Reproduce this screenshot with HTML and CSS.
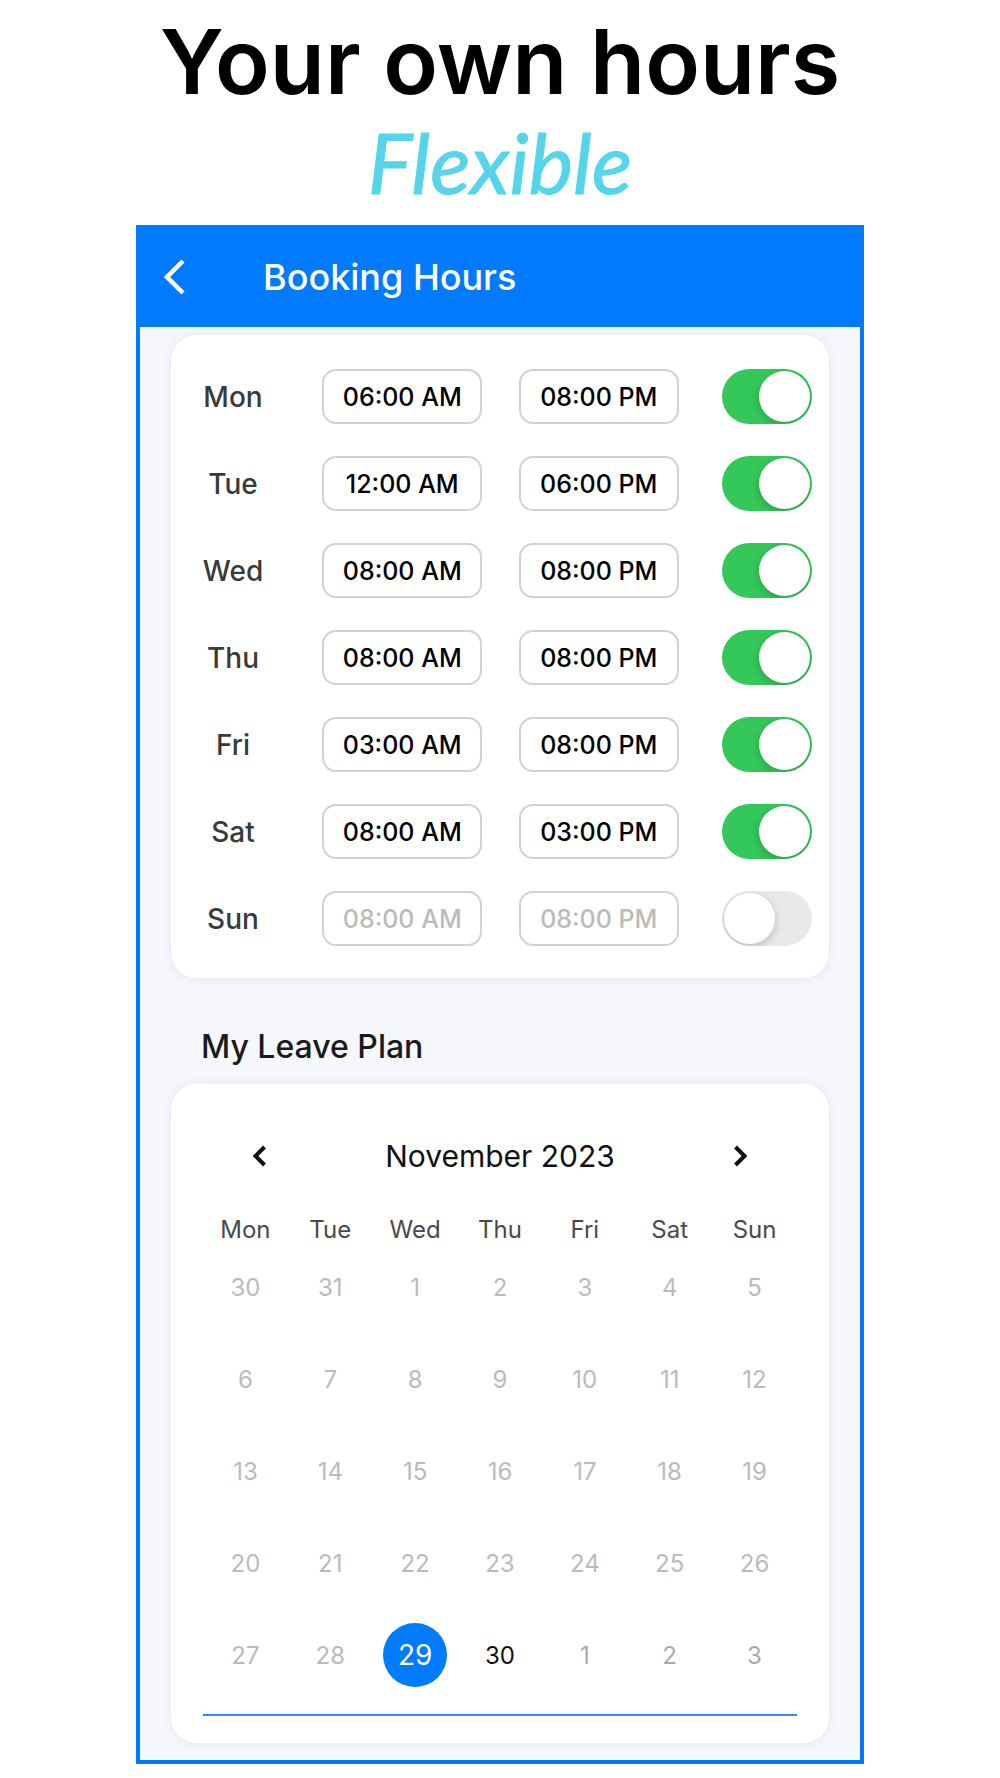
FILE: index.html
```html
<!DOCTYPE html>
<html lang="en">
<head>
<meta charset="utf-8">
<meta name="viewport" content="width=device-width, initial-scale=1">
<title>Booking Hours</title>
<link rel="stylesheet" href="styles.css">
</head>
<body>
<header class="promo">
  <h1 class="promo-title">Your own hours</h1>
  <p class="promo-script">Flexible</p>
</header>
<main class="phone">
  <div class="appbar">
    <button class="icon-button" type="button" aria-label="Back">
      <svg width="22" height="36" viewBox="0 0 22 36" fill="none" stroke="currentColor" stroke-width="4.500"><path d="M19 2L3 18L19 34"/></svg>
    </button>
    <h2 class="appbar-title">Booking Hours</h2>
  </div>
  <div class="content">
    <section class="card hours">
      <div class="row"><label class="day" for="mon">Mon</label><button class="time" type="button">06:00 AM</button><button class="time" type="button">08:00 PM</button><input class="switch" id="mon" type="checkbox" checked></div>
      <div class="row"><label class="day" for="tue">Tue</label><button class="time" type="button">12:00 AM</button><button class="time" type="button">06:00 PM</button><input class="switch" id="tue" type="checkbox" checked></div>
      <div class="row"><label class="day" for="wed">Wed</label><button class="time" type="button">08:00 AM</button><button class="time" type="button">08:00 PM</button><input class="switch" id="wed" type="checkbox" checked></div>
      <div class="row"><label class="day" for="thu">Thu</label><button class="time" type="button">08:00 AM</button><button class="time" type="button">08:00 PM</button><input class="switch" id="thu" type="checkbox" checked></div>
      <div class="row"><label class="day" for="fri">Fri</label><button class="time" type="button">03:00 AM</button><button class="time" type="button">08:00 PM</button><input class="switch" id="fri" type="checkbox" checked></div>
      <div class="row"><label class="day" for="sat">Sat</label><button class="time" type="button">08:00 AM</button><button class="time" type="button">03:00 PM</button><input class="switch" id="sat" type="checkbox" checked></div>
      <div class="row"><label class="day" for="sun">Sun</label><button class="time" type="button" disabled>08:00 AM</button><button class="time" type="button" disabled>08:00 PM</button><input class="switch" id="sun" type="checkbox"></div>
    </section>
    <h2 class="section-title">My Leave Plan</h2>
    <section class="card calendar">
      <div class="month-bar">
        <button class="icon-button" type="button" aria-label="Previous month">
          <svg width="16" height="22" viewBox="0 0 16 22" fill="none" stroke="currentColor" stroke-width="4"><path d="M13.500 2L4.500 11L13.500 20"/></svg>
        </button>
        <h3 class="month">November 2023</h3>
        <button class="icon-button" type="button" aria-label="Next month">
          <svg width="16" height="22" viewBox="0 0 16 22" fill="none" stroke="currentColor" stroke-width="4"><path d="M2.500 2L11.500 11L2.500 20"/></svg>
        </button>
      </div>
      <table class="dates">
        <thead><tr><th>Mon</th><th>Tue</th><th>Wed</th><th>Thu</th><th>Fri</th><th>Sat</th><th>Sun</th></tr></thead>
        <tbody>
          <tr><td>30</td><td>31</td><td>1</td><td>2</td><td>3</td><td>4</td><td>5</td></tr>
          <tr><td>6</td><td>7</td><td>8</td><td>9</td><td>10</td><td>11</td><td>12</td></tr>
          <tr><td>13</td><td>14</td><td>15</td><td>16</td><td>17</td><td>18</td><td>19</td></tr>
          <tr><td>20</td><td>21</td><td>22</td><td>23</td><td>24</td><td>25</td><td>26</td></tr>
          <tr><td>27</td><td>28</td><td><button class="date selected" type="button">29</button></td><td><button class="date" type="button">30</button></td><td class="next">1</td><td class="next">2</td><td class="next">3</td></tr>
        </tbody>
      </table>
    </section>
  </div>
</main>
</body>
</html>
```
FILE: styles.css
```css
* {
  box-sizing: border-box;
}

body {
  margin: 0;
  padding: 16px 16px 14px;
  background: #fff;
  color: #000;
  font-family: Inter, "Liberation Sans", sans-serif;
}

h1, h2, h3, p {
  margin: 0;
  font-weight: 400;
}

button {
  padding: 0;
  border: 0;
  background: none;
  color: inherit;
  font: inherit;
}

.promo {
  text-align: center;
}

.promo-title {
  font-size: 90px;
  line-height: 92px;
  font-weight: 600;
}

.promo-script {
  padding-bottom: 9px;
  color: #56d5ea;
  font-family: Lato, sans-serif;
  font-size: 84px;
  font-style: italic;
  line-height: 108px;
  -webkit-text-stroke: 1px currentColor;
}

.phone {
  max-width: 728px;
  margin: 0 auto;
  border: 4px solid #007aff;
  background: #f5f7fc;
}

.appbar {
  display: flex;
  align-items: center;
  gap: 77px;
  height: 98px;
  padding: 0 24px 3px;
  background: #007aff;
  color: #fff;
}

.icon-button {
  display: flex;
}

.appbar-title {
  font-size: 36px;
  line-height: 44px;
  font-weight: 500;
}

.content {
  padding: 8px 31px 17px;
}

.card {
  border-radius: 26px;
  background: #fff;
  box-shadow: 0 0 12px rgba(0, 0, 0, 0.07);
}

.hours {
  display: grid;
  gap: 32px;
  padding: 34px 17px 32px 0;
}

.row {
  display: grid;
  grid-template-columns: 133px 1fr 1fr 115px;
  align-items: center;
  justify-items: center;
}

.day {
  padding-right: 9px;
  color: #3a3a3a;
  font-size: 28px;
  font-weight: 500;
}

.time {
  width: 160px;
  height: 55px;
  border: 2px solid #d2d2d2;
  border-radius: 14px;
  font-size: 25px;
  font-weight: 500;
}

.time:disabled {
  color: #bbb;
}

.switch {
  display: flex;
  justify-content: flex-start;
  justify-self: end;
  overflow: hidden;
  width: 90px;
  height: 55px;
  margin: 0;
  padding: 2px;
  border-radius: 28px;
  background: #e9e9e9;
  appearance: none;
}

.switch::before {
  width: 51px;
  height: 51px;
  border-radius: 50%;
  background: #fff;
  box-shadow: 0 3px 8px rgba(0, 0, 0, 0.2);
  content: "";
}

.switch:checked {
  justify-content: flex-end;
  background: #34c759;
}

.section-title {
  padding: 49px 30px 17px;
  color: #1a1a1a;
  font-size: 32px;
  line-height: 40px;
  font-weight: 500;
}

.calendar {
  padding: 32px 32px 27px;
}

.month-bar {
  display: flex;
  align-items: center;
  justify-content: space-between;
  height: 80px;
  padding: 0 48px;
  color: #111;
}

.month {
  font-size: 30px;
}

.dates {
  width: 100%;
  margin-top: 22px;
  padding-bottom: 13px;
  border-bottom: 2px solid #2a8cff;
  border-spacing: 0;
  color: #bbb;
  font-size: 24px;
  table-layout: fixed;
}

.dates th {
  height: 23px;
  padding: 0;
  color: #4a4a4a;
  font-weight: 400;
  line-height: 23px;
}

.dates td {
  height: 92px;
  padding: 0;
  text-align: center;
}

.dates .next {
  color: #aaa;
}

.date {
  width: 64px;
  height: 64px;
  border-radius: 50%;
  color: #111;
}

.date.selected {
  background: #007aff;
  color: #fff;
  font-size: 28px;
}
```
